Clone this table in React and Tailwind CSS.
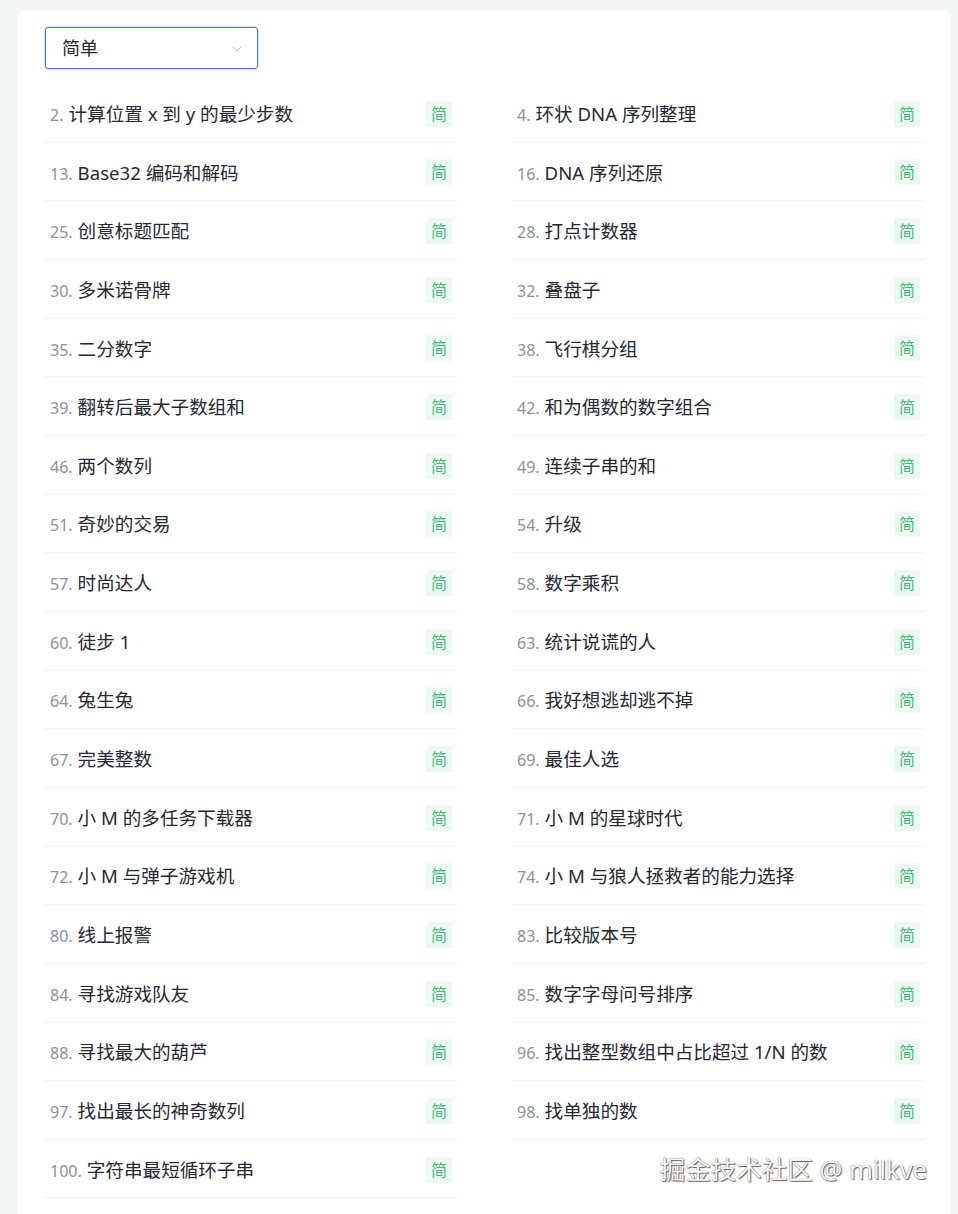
import { ChevronDown } from 'lucide-react';

const left = [
    [2, '计算位置 x 到 y 的最少步数'],
    [13, 'Base32 编码和解码'],
    [25, '创意标题匹配'],
    [30, '多米诺骨牌'],
    [35, '二分数字'],
    [39, '翻转后最大子数组和'],
    [46, '两个数列'],
    [51, '奇妙的交易'],
    [57, '时尚达人'],
    [60, '徒步 1'],
    [64, '兔生兔'],
    [67, '完美整数'],
    [70, '小 M 的多任务下载器'],
    [72, '小 M 与弹子游戏机'],
    [80, '线上报警'],
    [84, '寻找游戏队友'],
    [88, '寻找最大的葫芦'],
    [97, '找出最长的神奇数列'],
    [100, '字符串最短循环子串'],
];

const right = [
    [4, '环状 DNA 序列整理'],
    [16, 'DNA 序列还原'],
    [28, '打点计数器'],
    [32, '叠盘子'],
    [38, '飞行棋分组'],
    [42, '和为偶数的数字组合'],
    [49, '连续子串的和'],
    [54, '升级'],
    [58, '数字乘积'],
    [63, '统计说谎的人'],
    [66, '我好想逃却逃不掉'],
    [69, '最佳人选'],
    [71, '小 M 的星球时代'],
    [74, '小 M 与狼人拯救者的能力选择'],
    [83, '比较版本号'],
    [85, '数字字母问号排序'],
    [96, '找出整型数组中占比超过 1/N 的数'],
    [98, '找单独的数'],
];

function Row({ num, title }) {
    return (
        <div className="h-[58.67px] flex items-center justify-between border-b border-[#eef0f2] pl-[5px] pr-[5px] pt-[2px]">
            <div className="flex items-baseline">
                <span className="text-[16px] text-[#8a919f] mr-[5px]">{num}.</span>
                <span className="text-[18.6px] text-[#252933]">{title}</span>
            </div>
            <span className="w-[26px] h-[26px] flex items-center justify-center bg-[#eafaf1] text-[#4cb879] text-[16px] rounded-[2px]">简</span>
        </div>
    );
}

export default function App() {
    return (
        <div
            className="min-h-screen bg-[#f4f5f5] pt-[11px] pl-[18px] pr-[8px]"
            style={{ fontFamily: '"Noto Sans", "Noto Sans CJK SC", sans-serif' }}
        >
            <div className="relative bg-white rounded-t-[4px] pt-[16px] pl-[27px] pr-[25px] min-h-[1203px]">
                <div className="w-[213px] h-[42px] border border-[#4f70dc] rounded-[3px] flex items-center justify-between pl-[16px] pr-[12px] shadow-[0_0_0_1px_rgba(79,112,220,0.2)]">
                    <span className="text-[18px] text-[#252933]">简单</span>
                    <ChevronDown size={16} strokeWidth={1.5} className="text-[#c2c6cc] mt-[2px]" />
                </div>

                <div className="grid grid-cols-[412px_413px] gap-x-[55px] mt-[15px]">
                    <div className="flex flex-col">
                        {left.map(([n, t]) => (
                            <Row key={n} num={n} title={t} />
                        ))}
                    </div>
                    <div className="flex flex-col">
                        {right.map(([n, t]) => (
                            <Row key={n} num={n} title={t} />
                        ))}
                    </div>
                </div>

                <div className="absolute right-[23px] top-[1139px] text-[25.5px] text-[#f7f7f7] [text-shadow:0_0_1px_#444,1px_1px_1px_#666]">
                    掘金技术社区 @ milkve
                </div>
            </div>
        </div>
    );
}
